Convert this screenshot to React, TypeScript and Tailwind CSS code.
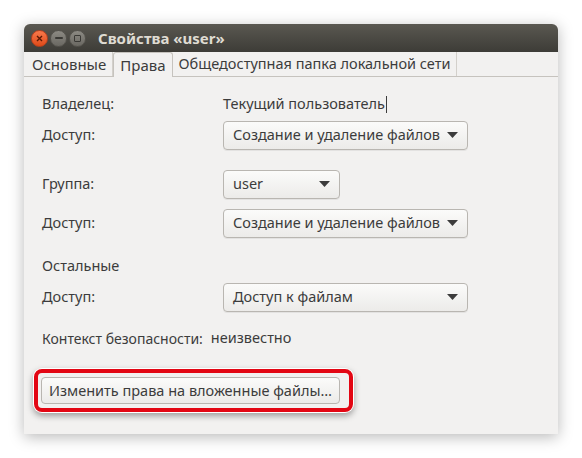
import type { ReactNode } from "react";

const font = { fontFamily: '"Noto Sans", "Open Sans", sans-serif' };

function Combo({ label, width }: { label: string; width: string }) {
  return (
    <div
      className={`flex h-[29px] items-center justify-between whitespace-nowrap rounded-[4px] border border-[#b9b6b1] bg-gradient-to-b from-[#fbfbfa] to-[#ecebe9] pl-[9px] pr-[9px] shadow-[0_1px_0_rgba(0,0,0,0.06)] ${width}`}
    >
      <span>{label}</span>
      <svg width="11" height="6" viewBox="0 0 11 6">
        <path d="M0 0 L11 0 L5.5 6 Z" fill="#3c3c3c" />
      </svg>
    </div>
  );
}

function Row({ label, children, className = "" }: { label: string; children?: ReactNode; className?: string }) {
  return (
    <div className={`flex items-center ${className}`}>
      <div className="w-[181px] shrink-0">{label}</div>
      {children}
    </div>
  );
}

export default function App() {
  return (
    <div className="h-[458px] w-[582px] bg-white pl-[24px] pt-[24px]" style={font}>
      <div className="flex h-[410px] w-[534px] flex-col whitespace-nowrap bg-[#f2f1f0] text-[14.5px] text-[#3c3c3c] shadow-[0_3px_14px_rgba(0,0,0,0.28)]">
        <div className="flex h-[28px] shrink-0 items-center rounded-t-[6px] bg-gradient-to-b from-[#5a5851] to-[#3d3c37] pl-[7px]">
          <div className="flex h-[17px] w-[17px] items-center justify-center rounded-full border border-[#b8401e] bg-gradient-to-b from-[#f7784a] to-[#df4a16]">
            <svg width="7" height="7" viewBox="0 0 7 7">
              <path d="M1 1 L6 6 M6 1 L1 6" stroke="#5a1a05" strokeWidth="1.4" />
            </svg>
          </div>
          <div className="ml-[2px] flex h-[17px] w-[17px] items-center justify-center rounded-full border border-[#55534d] bg-gradient-to-b from-[#8c8a83] to-[#6a6862]">
            <div className="h-[2px] w-[8px] rounded bg-[#3a3935]" />
          </div>
          <div className="ml-[2px] flex h-[17px] w-[17px] items-center justify-center rounded-full border border-[#55534d] bg-gradient-to-b from-[#8c8a83] to-[#6a6862]">
            <div className="h-[7px] w-[7px] rounded-[1px] border-[1.5px] border-[#3a3935]" />
          </div>
          <div className="ml-[12px] text-[15px] font-bold text-[#dfdbd2]">Свойства «user»</div>
        </div>

        <div className="flex h-[25px] shrink-0 items-end border-b border-[#c6c3be] bg-[#f2f1f0] text-[15px]">
          <div className="flex h-[24px] items-center border-r border-[#d3d0cb] pl-[8px] pr-[6px]">Основные</div>
          <div className="relative -mb-px flex h-[25px] items-center rounded-t-[3px] border border-b-0 border-[#c6c3be] bg-[#f2f1f0] pl-[6px] pr-[6px]">
            Права
          </div>
          <div className="flex h-[24px] items-center border-r border-[#d3d0cb] pl-[6px] pr-[6px] text-[14.5px]">
            Общедоступная папка локальной сети
          </div>
        </div>

        <div className="flex flex-col pl-[18px] pt-[16px]">
          <Row label="Владелец:" className="h-[22px]">
            <span className="flex items-center">
              Текущий пользователь
              <span className="ml-[1px] inline-block h-[17px] w-px bg-[#3c3c3c]" />
            </span>
          </Row>
          <Row label="Доступ:" className="mt-[5px] h-[30px]">
            <Combo label="Создание и удаление файлов" width="w-[245px]" />
          </Row>
          <Row label="Группа:" className="mt-[19px] h-[30px]">
            <Combo label="user" width="w-[117px]" />
          </Row>
          <Row label="Доступ:" className="mt-[9px] h-[30px]">
            <Combo label="Создание и удаление файлов" width="w-[245px]" />
          </Row>
          <div className="mt-[17px] flex h-[22px] items-center">Остальные</div>
          <Row label="Доступ:" className="mt-[5px] h-[30px]">
            <Combo label="Доступ к файлам" width="w-[245px]" />
          </Row>
          <div className="mt-[15px] flex h-[22px] items-center text-[14px]">
            <span>Контекст безопасности:</span>
            <span className="ml-[8px] text-[14.5px]">неизвестно</span>
          </div>
          <div className="ml-[-9px] mt-[19px] w-fit rounded-[9px] bg-white p-[1px] shadow-[0_3px_6px_rgba(0,0,0,0.35)]">
            <div className="rounded-[8px] border-[4px] border-[#e30613] bg-[#f2f1f0] py-[4px] pl-[3px] pr-[9px]">
              <div className="flex h-[27px] items-center rounded-[4px] border border-[#b9b6b1] bg-gradient-to-b from-[#fbfbfa] to-[#ecebe9] px-[7px]">
                Изменить права на вложенные файлы…
              </div>
            </div>
          </div>
        </div>
      </div>
    </div>
  );
}
